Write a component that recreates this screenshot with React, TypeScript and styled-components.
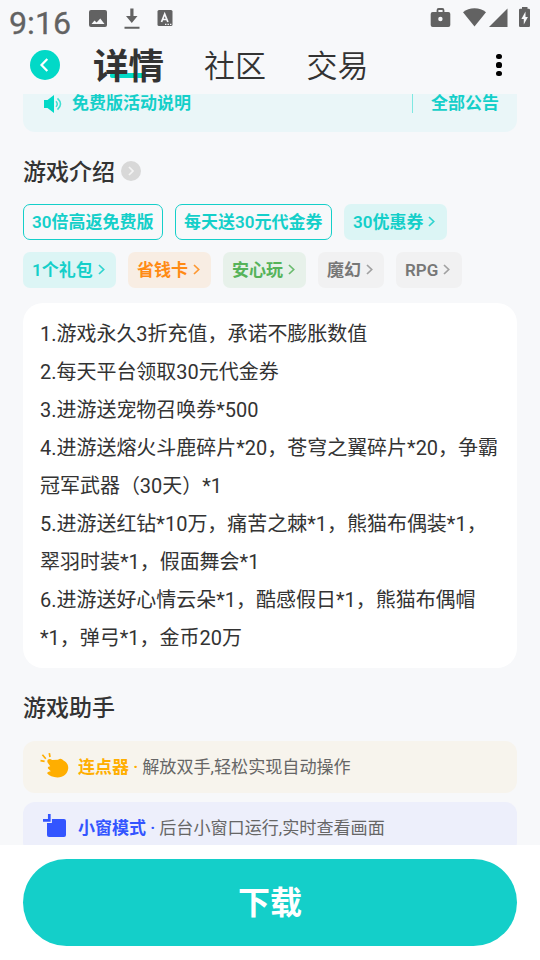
import React from "react";
import styled, { createGlobalStyle } from "styled-components";

const GlobalStyle = createGlobalStyle`
  * { box-sizing: border-box; }
  body { margin: 0; background: #f7f8fa; }
`;

const Screen = styled.main`
  display: flex;
  flex-direction: column;
  width: 540px;
  height: 960px;
  overflow: hidden;
  background: #f7f8fa;
  color: #333;
  font-family: Roboto, "Noto Sans CJK SC", sans-serif;
  white-space: nowrap;
`;

const StatusBar = styled.header`
  display: flex;
  align-items: flex-start;
  justify-content: space-between;
  height: 38px;
  padding: 0 9px 0 9px;
  color: #626262;
`;

const StatusGroup = styled.div`
  display: flex;
  align-items: flex-start;
`;

const Clock = styled.time`
  width: 80px;
  padding-top: 3px;
  font-size: 32.2px;
  line-height: 40px;
  -webkit-text-stroke: 0.3px currentColor;
`;

const StatusIcon = styled.svg<{ $gap?: number; $top?: number }>`
  display: block;
  flex: none;
  margin-left: ${(p) => p.$gap ?? 0}px;
  margin-top: ${(p) => p.$top ?? 8}px;
`;

const TabBar = styled.nav`
  display: flex;
  align-items: center;
  height: 56px;
  padding: 0 30px;
`;

const BackButton = styled.button`
  display: grid;
  place-items: center;
  width: 30px;
  height: 30px;
  margin-right: 33px;
  margin-bottom: 2px;
  padding: 0;
  border: 0;
  border-radius: 50%;
  background: #02d9c7;
`;

const Tab = styled.span<{ $active?: boolean }>`
  position: relative;
  margin-right: ${(p) => (p.$active ? 40 : 40.5)}px;
  padding-top: 2px;
  color: #333;
  font-size: ${(p) => (p.$active ? 35.5 : 31)}px;
  font-weight: ${(p) => (p.$active ? 600 : 350)};
  line-height: 50px;
`;

const TabLabel = styled.span`
  position: relative;
`;

const TabMark = styled.i`
  position: absolute;
  left: 17px;
  bottom: 14px;
  width: 35px;
  height: 5px;
  border-radius: 2px;
  background: #02d9c7;
`;

const MoreButton = styled.button`
  display: flex;
  flex-direction: column;
  align-items: center;
  gap: 3px;
  margin: 0 8px 2px auto;
  width: 6px;
  padding: 0;
  border: 0;
  background: none;
`;

const Dot = styled.i`
  width: 5.2px;
  height: 5.2px;
  border-radius: 50%;
  background: #000;
`;

const Content = styled.div`
  flex: 1;
  min-height: 0;
  padding: 0 23px;
  overflow: hidden;
`;

const Notice = styled.div`
  display: flex;
  align-items: flex-end;
  height: 38px;
  padding: 0 18px 19px 20px;
  border-radius: 0 0 12px 12px;
  background: #eaf6f8;
  color: #14cfc9;
  font-size: 17px;
  font-weight: 600;
  line-height: 19px;
`;

const NoticeText = styled.span`
  flex: 1;
  margin-left: 9px;
`;

const NoticeAll = styled.span`
  padding-left: 19px;
  box-shadow: inset 1px 0 #7fe8e2;
`;

const SectionTitle = styled.h2<{ $top: number }>`
  display: flex;
  align-items: center;
  gap: 6px;
  height: 32px;
  margin: ${(p) => p.$top}px 0 0;
  font-size: 23px;
  font-weight: 500;
  line-height: 32px;
`;

const TitleText = styled.span`
  padding-top: 3px;
`;

const RoundArrow = styled.svg`
  display: block;
`;

const Tags = styled.div`
  display: flex;
  flex-wrap: wrap;
  gap: 12px;
  margin-top: 17px;
`;

type Tone = "outline" | "teal" | "orange" | "green" | "gray";

const tones: Record<Tone, { fg: string; bg: string; edge: string }> = {
  outline: { fg: "#14cfc9", bg: "transparent", edge: "#14cfc9" },
  teal: { fg: "#14cfc9", bg: "#dcf5f5", edge: "transparent" },
  orange: { fg: "#ff8a14", bg: "#f8ede3", edge: "transparent" },
  green: { fg: "#56b35a", bg: "#e7f1ea", edge: "transparent" },
  gray: { fg: "#777", bg: "#f1f1f2", edge: "transparent" },
};

const TagBox = styled.span<{ $tone: Tone; $width: number }>`
  display: flex;
  align-items: center;
  gap: 5px;
  width: ${(p) => p.$width}px;
  height: 36px;
  padding: 0 8px;
  border: 1px solid ${(p) => tones[p.$tone].edge};
  border-radius: 7px;
  background: ${(p) => tones[p.$tone].bg};
  color: ${(p) => tones[p.$tone].fg};
  font-size: 17px;
  font-weight: 600;
  line-height: 34px;
`;

const Card = styled.article`
  height: 365px;
  margin-top: 15px;
  padding: 13px 17px;
  border-radius: 20px;
  background: #fff;
`;

const Line = styled.p`
  margin: 0;
  font-size: 19.98px;
  line-height: 37.95px;
`;

const Helper = styled.div<{ $bg: string }>`
  display: flex;
  align-items: center;
  height: 52px;
  margin-bottom: 9px;
  padding: 0 17px;
  border-radius: 12px;
  background: ${(p) => p.$bg};
  color: #666;
  font-size: 17.1px;
`;

const HelperList = styled.div`
  margin-top: 18px;
`;

const HelperIcon = styled.svg`
  display: block;
  flex: none;
  margin-right: 8px;
  overflow: visible;
`;

const HelperText = styled.span`
  padding-bottom: 3px;
`;

const HelperName = styled.b<{ $color: string }>`
  margin-right: 4px;
  color: ${(p) => p.$color};
  font-size: 17px;
  font-weight: 600;
`;

const Footer = styled.footer`
  height: 115px;
  padding: 14px 23px;
  background: #fff;
`;

const Download = styled.button`
  display: block;
  width: 100%;
  height: 87px;
  padding: 0;
  border: 0;
  border-radius: 44px;
  background: #14cfc9;
  color: #fff;
  font-family: inherit;
  font-size: 32px;
  font-weight: 700;
  line-height: 84px;
`;

const tags: { text: string; tone: Tone; width: number; arrow?: boolean }[] = [
  { text: "30倍高返免费版", tone: "outline", width: 140 },
  { text: "每天送30元代金券", tone: "outline", width: 157 },
  { text: "30优惠券", tone: "teal", width: 103, arrow: true },
  { text: "1个礼包", tone: "teal", width: 93, arrow: true },
  { text: "省钱卡", tone: "orange", width: 83, arrow: true },
  { text: "安心玩", tone: "green", width: 83, arrow: true },
  { text: "魔幻", tone: "gray", width: 66, arrow: true },
  { text: "RPG", tone: "gray", width: 66, arrow: true },
];

const lines = [
  "1.游戏永久3折充值，承诺不膨胀数值",
  "2.每天平台领取30元代金券",
  "3.进游送宠物召唤券*500",
  "4.进游送熔火斗鹿碎片*20，苍穹之翼碎片*20，争霸",
  "冠军武器（30天）*1",
  "5.进游送红钻*10万，痛苦之棘*1，熊猫布偶装*1，",
  "翠羽时装*1，假面舞会*1",
  "6.进游送好心情云朵*1，酷感假日*1，熊猫布偶帽",
  "*1，弹弓*1，金币20万",
];

function Tag({ text, tone, width, arrow }: (typeof tags)[number]) {
  return (
    <TagBox $tone={tone} $width={width}>
      {text}
      {arrow && (
        <svg width="7" height="12" viewBox="0 0 7 12" fill="none" stroke="currentColor" strokeWidth="1.7" opacity={tone === "gray" ? 0.65 : 0.85}>
          <path d="M1 1 5.7 5.5 1 10" />
        </svg>
      )}
    </TagBox>
  );
}

export default function App() {
  return (
    <Screen>
      <GlobalStyle />
      <StatusBar>
        <StatusGroup>
          <Clock>9:16</Clock>
          <StatusIcon width="18" height="18" viewBox="0 0 18 18" $top={10}>
            <rect width="18" height="17" rx="2" fill="currentColor" />
            <path d="M2.5 14 5.5 10.5 7.6 12.6 11.3 8.5 15.5 14Z" fill="#f7f8fa" />
          </StatusIcon>
          <StatusIcon width="16" height="21" viewBox="0 0 16 21" $gap={17} $top={8}>
            <path d="M6.3 0.5H9.5V8H13.5L7.8 15L2 8H6.3Z M0.5 18.8H15.5V20.7H0.5Z" fill="currentColor" />
          </StatusIcon>
          <StatusIcon width="16" height="17" viewBox="0 0 16 17" $gap={17} $top={10}>
            <rect x="0.5" width="15" height="16" rx="1.5" fill="currentColor" />
            <path d="M4.5 12 7.7 4 10.9 12M5.8 9.5H9.6" fill="none" stroke="#f7f8fa" strokeWidth="1.7" />
            <path d="M8 14.3H9.4M10.5 14.3H11.9M13 14.3H14.4" stroke="#f7f8fa" strokeWidth="1.3" />
          </StatusIcon>
        </StatusGroup>
        <StatusGroup>
          <StatusIcon width="21" height="20" viewBox="0 0 21 20" $top={8}>
            <path d="M7.5 4V2.2Q7.5 1 8.7 1H12.3Q13.5 1 13.5 2.2V4" fill="none" stroke="currentColor" strokeWidth="1.8" />
            <rect x="0.7" y="4" width="19.6" height="15" rx="2" fill="currentColor" />
            <circle cx="10.4" cy="11" r="2.2" fill="#f7f8fa" />
          </StatusIcon>
          <StatusIcon width="23" height="19" viewBox="0 0 23 19" $gap={12} $top={8}>
            <path d="M0 4.2C6-1 17-1 23 4.2L11.5 18.5Z" fill="currentColor" />
          </StatusIcon>
          <StatusIcon width="19" height="19" viewBox="0 0 19 19" $gap={3} $top={8}>
            <path d="M18.5 0.5V19H0Z" fill="currentColor" />
          </StatusIcon>
          <StatusIcon width="12" height="20" viewBox="0 0 12 20" $gap={11} $top={7}>
            <path d="M3 1.8V0H8.5V1.8H9.8Q11 1.8 11 3V19Q11 20 9.8 20H1.2Q0 20 0 19V3Q0 1.8 1.2 1.8H3Z" fill="currentColor" />
            <path d="M6.5 4.5 2.4 12H4.8V17.5L8.9 10H6.5Z" fill="#f7f8fa" />
          </StatusIcon>
        </StatusGroup>
      </StatusBar>

      <TabBar>
        <BackButton aria-label="返回">
          <svg width="30" height="30" viewBox="0 0 30 30" fill="none" stroke="#fff" strokeWidth="2.2">
            <path d="M17.3 9 11.5 15 17.3 21" />
          </svg>
        </BackButton>
        <Tab $active>
          <TabMark />
          <TabLabel>详情</TabLabel>
        </Tab>
        <Tab>社区</Tab>
        <Tab>交易</Tab>
        <MoreButton aria-label="更多">
          <Dot />
          <Dot />
          <Dot />
        </MoreButton>
      </TabBar>

      <Content>
        <Notice>
          <svg width="20" height="18" viewBox="0 0 20 18" fill="none">
            <path d="M1 5H4.5L11 0V18L4.5 13H1Z" fill="#02d9c7" />
            <path d="M13 6.2Q15.5 9 13 11.8" stroke="#3fe0d3" strokeWidth="1.5" />
            <path d="M14.5 3.4Q20.5 9 14.5 14.6" stroke="#3fe0d3" strokeWidth="1.6" />
          </svg>
          <NoticeText>免费版活动说明</NoticeText>
          <NoticeAll>全部公告</NoticeAll>
        </Notice>

        <SectionTitle $top={23}>
          <TitleText>游戏介绍</TitleText>
          <RoundArrow width="20" height="20" viewBox="0 0 20 20" fill="none">
            <circle cx="10" cy="10" r="10" fill="#d8d8d8" />
            <path d="M8 6 12 10 8 14" stroke="#f4f4f4" strokeWidth="1.7" />
          </RoundArrow>
        </SectionTitle>

        <Tags>
          {tags.map((tag) => (
            <Tag key={tag.text} {...tag} />
          ))}
        </Tags>

        <Card>
          {lines.map((line) => (
            <Line key={line}>{line}</Line>
          ))}
        </Card>

        <SectionTitle $top={23}>
          <TitleText>游戏助手</TitleText>
        </SectionTitle>
        <HelperList>
          <Helper $bg="#f7f4ed">
            <HelperIcon width="30" height="26" viewBox="0 0 30 26">
              <path d="M7.6 8.5C6.2 5.4 10 4 12 6L18 5.8Q20 4.2 22 5.2L23.5 6.6C26.8 8.2 28.5 11 28.2 14.5C27.5 20 23.5 23.4 17.5 23.4C13 23.4 9 22 7.3 19.6C6.8 18 8.5 17.6 10.8 17.2L8 14.5C7.4 13 8.6 12.6 10.2 12.2Z" fill="#ffae00" />
              <path d="M0.5 6.6 4.6 7.4M2.4 0.8 5.8 4.8M9.3-0.8 10 3" stroke="#ffae00" strokeWidth="1.7" />
            </HelperIcon>
            <HelperText>
              <HelperName $color="#ffae00">连点器 ·</HelperName>
              解放双手,轻松实现自动操作
            </HelperText>
          </Helper>
          <Helper $bg="#edeffb">
            <HelperIcon width="30" height="26" viewBox="0 0 30 26">
              <rect x="7" y="4" width="19" height="18" rx="2" fill="#3355ff" />
              <path d="M3 5.3H9.3V-1" fill="none" stroke="#edeffb" strokeWidth="5.2" />
              <path d="M3 5.3H9.3V-1" fill="none" stroke="#3355ff" strokeWidth="2.7" />
            </HelperIcon>
            <HelperText>
              <HelperName $color="#3355ff">小窗模式 ·</HelperName>
              后台小窗口运行,实时查看画面
            </HelperText>
          </Helper>
        </HelperList>
      </Content>

      <Footer>
        <Download>下载</Download>
      </Footer>
    </Screen>
  );
}
